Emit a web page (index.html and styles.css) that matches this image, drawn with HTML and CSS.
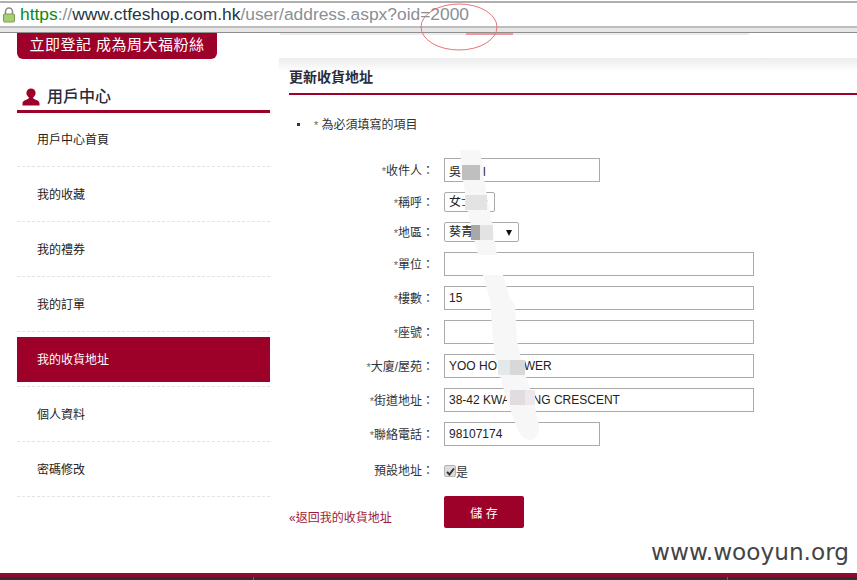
FILE: index.html
```html
<!DOCTYPE html>
<html lang="zh-Hant">
<head>
<meta charset="utf-8">
<title>更新收貨地址</title>
<link rel="stylesheet" href="styles.css">
</head>
<body>
<div class="page">
  <header class="browser">
    <div class="urlbar">
      <svg class="lock" width="14" height="16" viewBox="0 0 14 16"><path d="M3.5 7V4.5a3.5 3.5 0 0 1 7 0V7" fill="none" stroke="#8c8c8c" stroke-width="1.6"/><rect x="1.5" y="7" width="11" height="8" rx="1" fill="#a6d06e" stroke="#7d9c5a"/></svg>
      <div class="url"><span class="u-green">https</span><span class="u-grey">://</span><span class="u-dark">www.ctfeshop.com.hk</span><span class="u-grey">/user/address.aspx?oid=2000</span></div>
    </div>
    <div class="chrome-strip"></div>
  </header>
  <div class="content">
    <aside class="sidebar">
      <a class="banner">立即登記 成為周大福粉絲</a>
      <h2 class="side-title">
        <svg width="18" height="18" viewBox="0 0 18 18"><circle cx="9" cy="5" r="4.6" fill="#9d0029"/><path d="M6.8 8.5h4.4v1.8c0 .9 6.3 1.8 6.3 5.2v2H.5v-2c0-3.4 6.300-4.300 6.300-5.200z" fill="#9d0029"/></svg>
        <span>用戶中心</span>
      </h2>
      <ul class="menu">
        <li><a>用戶中心首頁</a></li>
        <li><a>我的收藏</a></li>
        <li><a>我的禮券</a></li>
        <li><a>我的訂單</a></li>
        <li class="active"><a>我的收貨地址</a></li>
        <li><a>個人資料</a></li>
        <li><a>密碼修改</a></li>
      </ul>
    </aside>
    <main class="main">
      <div class="topstrip"><span class="pink"></span></div>
      <div class="title-wrap"><h1 class="title">更新收貨地址</h1></div>
      <ul class="notes"><li><span class="star">*</span> 為必須填寫的項目</li></ul>
      <form class="form">
        <label class="lbl"><span class="star">*</span>收件人：</label>
        <input class="field short" type="text" value="吳　   l">
        <label class="lbl"><span class="star">*</span>稱呼：</label>
        <div class="sel s-title"><span>女士</span></div>
        <label class="lbl"><span class="star">*</span>地區：</label>
        <div class="sel s-area"><span>葵青</span></div>
        <label class="lbl"><span class="star">*</span>單位：</label>
        <input class="field long" type="text">
        <label class="lbl"><span class="star">*</span>樓數：</label>
        <input class="field long" type="text" value="15">
        <label class="lbl"><span class="star">*</span>座號：</label>
        <input class="field long" type="text">
        <label class="lbl"><span class="star">*</span>大廈/屋苑：</label>
        <input class="field long" type="text" value="YOO HO        WER">
        <label class="lbl"><span class="star">*</span>街道地址：</label>
        <input class="field long" type="text" value="38-42 KWA       NG CRESCENT">
        <label class="lbl"><span class="star">*</span>聯絡電話：</label>
        <input class="field short" type="text" value="98107174">
        <label class="lbl check-lbl">預設地址：</label>
        <div class="check-row">
          <span class="box"><svg width="9" height="9" viewBox="0 0 9 9"><path d="M1 4.800 3.400 7.500 8 1.500" fill="none" stroke="#333" stroke-width="2"/></svg></span><span>是</span>
        </div>
        <a class="back">«返回我的收貨地址</a>
        <button class="save" type="button">儲 存</button>
      </form>
    </main>
  </div>
  <footer class="footer"><i></i><i></i></footer>
  <svg class="marks" width="857" height="580" viewBox="0 0 857 580">
    <path class="smear" d="M460 150H480L484 180 490 212 497 255H478L468 212 463 180Z"/>
    <path class="smear" d="M483 275H503L510 298 515 305 517 340 522 365 532 395 539 425C540 445 522 445 516 425L505 395 496 360 493 340 490 300Z"/>
    <rect x="462" y="165" width="18" height="15" fill="#bfbfbf"/>
    <rect x="465" y="195" width="22" height="15" fill="#e3e3e3"/>
    <rect x="471" y="225" width="9" height="15" fill="#a8a8a8"/>
    <rect x="480" y="225" width="13" height="15" fill="#e3e3e3"/>
    <rect x="498" y="360" width="12" height="15" fill="#e3e8e8"/>
    <rect x="510" y="360" width="15" height="15" fill="#d8d8d8"/>
    <rect x="510" y="390" width="15" height="15" fill="#e0dce0"/>
    <rect x="525" y="390" width="10" height="15" fill="#ece8ec"/>
    <ellipse cx="459" cy="27" rx="38" ry="23" fill="none" stroke="#e8737a" stroke-width="1"/>
  </svg>
  <div class="watermark">www.wooyun.org</div>
</div>
</body>
</html>
```
FILE: styles.css
```css
* { box-sizing: border-box; }
html, body { margin: 0; padding: 0; background: #fff; }
body { font-family: "Liberation Sans", "Noto Sans CJK TC", sans-serif; font-size: 12px; color: #333; }
a { text-decoration: none; color: inherit; }
ul { list-style: none; margin: 0; padding: 0; }
h1, h2 { margin: 0; }

.page { position: relative; width: 857px; height: 580px; overflow: hidden; display: flex; flex-direction: column; }

.browser { height: 33px; flex: none; border-top: 1px solid #fff; }
.urlbar { height: 27px; border-top: 2px solid #b0b0b0; border-bottom: 2px solid #bdbdbd; display: flex; align-items: center; gap: 4px; padding-left: 2px; background: #fff; }
.lock { flex: none; }
.url { font-size: 17.4px; line-height: 23px; white-space: nowrap; }
.u-green { color: #0b8a16; }
.u-grey { color: #8a8f94; }
.u-dark { color: #27333d; }
.chrome-strip { height: 5px; background: #e6e6e6; border-bottom: 1px solid #8e8e8e; }

.content { flex: 1; display: flex; min-height: 0; }
.sidebar { width: 253px; margin-left: 17px; flex: none; }
.banner { display: block; width: 200px; height: 26px; background: #9d0029; color: #fff; font-size: 15px; letter-spacing: 0.5px; line-height: 24px; text-align: center; border-radius: 0 0 6px 6px; }
.side-title { height: 54px; padding-top: 25px; border-bottom: 3px solid #9d0029; display: flex; align-items: center; gap: 7px; padding-left: 5px; font-size: 16px; line-height: 20px; font-weight: 500; color: #2b2b3a; }
.side-title svg { flex: none; }
.menu { margin-top: -1px; }
.menu li { height: 55px; border-bottom: 1px dashed #e3e3e3; }
.menu a { display: flex; align-items: center; height: 52px; padding-left: 20px; color: #222; font-size: 12px; }
.menu li.active { padding-top: 5px; }
.menu li.active a { background: #9d0029; color: #fff; height: 45px; padding-bottom: 2px; }

.main { flex: 1; margin-left: 9px; min-width: 0; }
.topstrip { width: 469px; height: 2px; margin-left: 1px; background: #ececec; display: flex; }
.pink { width: 47px; height: 2px; margin-left: 186px; background: #f29a9a; }
.title-wrap { margin-top: 23px; height: 37px; padding: 10px 0 0 10px; background: linear-gradient(#ececec 0, #fff 14px); }
.title { font-size: 14px; line-height: 18px; font-weight: 700; color: #2b2b3a; height: 27px; border-bottom: 2px solid #9d0029; }
.notes { margin: 22px 0 0 35px; height: 16px; line-height: 16px; position: relative; font-size: 12px; color: #333; }
.notes li::before { content: ""; position: absolute; left: -17px; top: 6px; width: 3px; height: 3px; background: #333; }
.star { color: #666; font-size: 11px; }

.form { display: grid; grid-template-columns: 155px 1fr; row-gap: 10px; column-gap: 10px; margin-top: 25px; align-items: center; justify-items: start; }
.lbl { justify-self: end; white-space: nowrap; font-size: 12px; color: #333; margin-bottom: 2px; }
.field { height: 24px; border: 1px solid #aaa; padding: 0 4px; background: #fff; font: 12px "Liberation Sans", "Noto Sans CJK TC", sans-serif; color: #222; outline: none; }
.short { width: 156px; }
.long { width: 310px; }
.sel { height: 20px; border: 1px solid #aaa; border-radius: 2px; padding: 0 4px; line-height: 18px; color: #222; position: relative; }
.sel::after { content: ""; position: absolute; right: 6px; top: 7px; border-left: 3.5px solid transparent; border-right: 3.5px solid transparent; border-top: 6px solid #111; }
.s-title { width: 51px; }
.s-area { width: 75px; }
.check-lbl { margin-top: 4px; }
.check-row { display: flex; align-items: center; margin-top: 6px; height: 18px; color: #333; }
.box { width: 12px; height: 12px; background: #dcdcdc; border: 1px solid #b5b5b5; border-radius: 2px; display: flex; align-items: center; justify-content: center; }
.back { justify-self: start; align-self: end; color: #9d1a36; margin: 6px 0 3px 10px; font-size: 12px; }
.save { width: 80px; height: 32px; background: #9d0029; color: #fff; border: 0; border-radius: 2px; font: 12px "Liberation Sans", "Noto Sans CJK TC", sans-serif; margin-top: 6px; }

.footer { flex: none; height: 7px; background: #2f2f2f; border-top: 4px solid #8f0a2e; display: flex; padding-left: 253px; gap: 473px; }
.footer i { width: 1px; background: #666; }

.marks { position: absolute; left: 0; top: 0; pointer-events: none; }
.smear { fill: #f7f7f7; }
.watermark { position: absolute; left: 651px; top: 537px; font: 23.2px/30px "DejaVu Sans", sans-serif; color: #444; white-space: nowrap; }
```
